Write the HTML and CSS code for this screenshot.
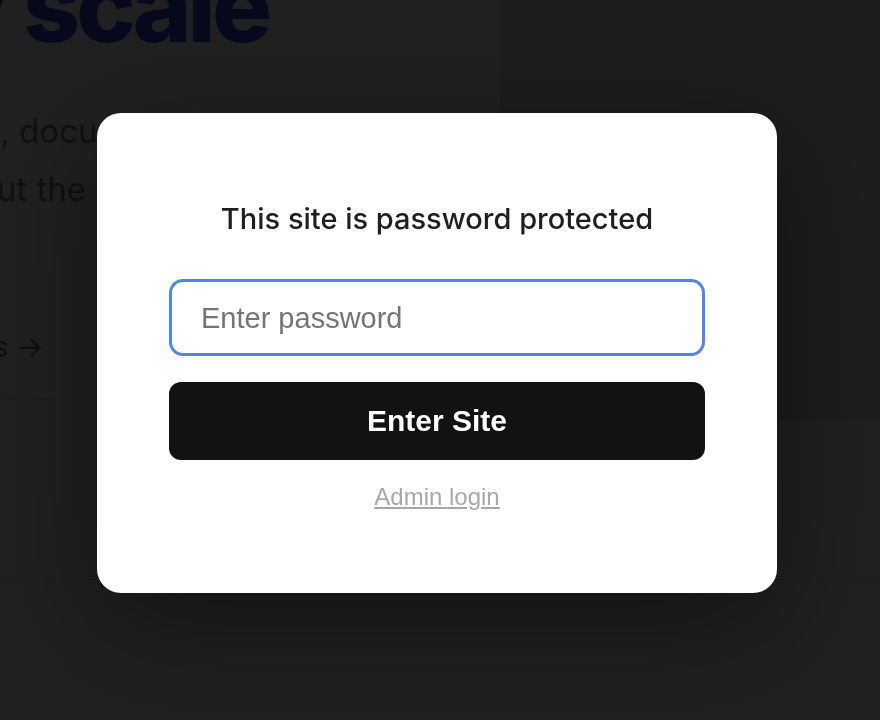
FILE: index.html
```html
<!DOCTYPE html>
<html>
<head>
    <title>Protected</title>
    <link rel="stylesheet" href="styles.css">
</head>
<body>
    <div class="page">

        <section class="hero">
            <div class="hero-copy">
                <h1 class="hero-title"><span>Docs at any scale</span></h1>
                <p class="hero-line line-one"><span>Plans, documents</span></p>
                <p class="hero-line line-two"><span>Everything about the</span></p>
                <a class="hero-link" href="#"><span>View all features &rarr;</span></a>
                <div class="hero-rule"></div>
            </div>
            <div class="hero-panel"></div>
        </section>

        <section class="band"></section>
        <section class="band band-last"></section>

    </div>

    <!-- Password gate over the page -->
    <div class="overlay">
        <form class="gate" onsubmit="return false;">
            <h2 class="gate-title">This site is password protected</h2>
            <input type="password" class="gate-input" placeholder="Enter password">
            <button type="submit" class="gate-button">Enter Site</button>
            <a href="#" class="gate-admin">Admin login</a>
        </form>
    </div>
</body>
</html>
```

FILE: styles.css
```css
body 
{
    margin: 0;
    background: #ffffff;
    font-family: Inter, "Noto Sans", sans-serif;
    overflow: hidden;
}

.page 
{
    width: 880px;
    height: 720px;
    overflow: hidden;
}

.hero 
{
    display: grid;
    grid-template-columns: 500px 1fr;
    height: 420px;
}

.hero-copy 
{
    min-width: 0;
}

.hero-title 
{
    display: flex;
    justify-content: flex-end;
    width: 268px;
    height: 100px;
    margin: -44px 0 0 0;
    white-space: nowrap;
    font-size: 100px;
    line-height: 100px;
    font-weight: 800;
    letter-spacing: -4px;
    color: #2c46d8;
}

.hero-line 
{
    display: flex;
    justify-content: flex-end;
    white-space: nowrap;
    margin: 0;
    font-size: 33px;
    line-height: 58px;
    color: #7e7e7e;
}

.line-one 
{
    width: 193px;
    margin-top: 46px;
}

.line-two 
{
    width: 86px;
}

.hero-link 
{
    display: flex;
    justify-content: flex-end;
    width: 44px;
    margin-top: 111px;
    white-space: nowrap;
    font-size: 29px;
    color: #6e6e6e;
    text-decoration: none;
}

.hero-rule 
{
    width: 52px;
    margin-top: 34px;
    border-top: 1px solid #cfcfcf;
}

.hero-panel 
{
    background: #dfe3f3;
}

.band 
{
    height: 159px;
    background: #fafafa;
    border-bottom: 1px solid #d6d6d6;
}

.band-last 
{
    height: 200px;
    border-bottom: none;
}

.overlay 
{
    position: fixed;
    inset: 0;
    display: flex;
    align-items: center;
    justify-content: center;
    padding: 0 6px 15px 0;
    background: rgba(0, 0, 0, 0.875);
}

.gate 
{
    display: flex;
    flex-direction: column;
    align-items: stretch;
    width: 680px;
    box-sizing: border-box;
    padding: 88px 72px 82px 72px;
    background: #ffffff;
    border-radius: 24px;
    box-shadow: 0 30px 120px rgba(0, 0, 0, 0.45);
}

.gate-title 
{
    margin: 0 0 42px 0;
    text-align: center;
    font-size: 29px;
    line-height: 36px;
    font-weight: 500;
    color: #1f1f1f;
}

.gate-input 
{
    height: 77px;
    box-sizing: border-box;
    padding: 3px 29px 0 29px;
    border: 3px solid #4f86ec;
    border-radius: 14px;
    outline: none;
    font-family: "Liberation Sans", Arial, sans-serif;
    font-size: 29px;
    color: #222;
}

.gate-input::placeholder 
{
    color: #757575;
}

.gate-button 
{
    height: 78px;
    margin-top: 26px;
    padding-top: 2px;
    background-color: #121212;
    color: white;
    border: none;
    border-radius: 12px;
    font-family: "Liberation Sans", Arial, sans-serif;
    font-size: 30px;
    font-weight: bold;
    cursor: pointer;
}

.gate-admin 
{
    align-self: center;
    margin-top: 23px;
    font-family: "Liberation Sans", Arial, sans-serif;
    font-size: 24px;
    line-height: 28px;
    color: #a8a8a8;
    text-decoration: underline;
}
```
